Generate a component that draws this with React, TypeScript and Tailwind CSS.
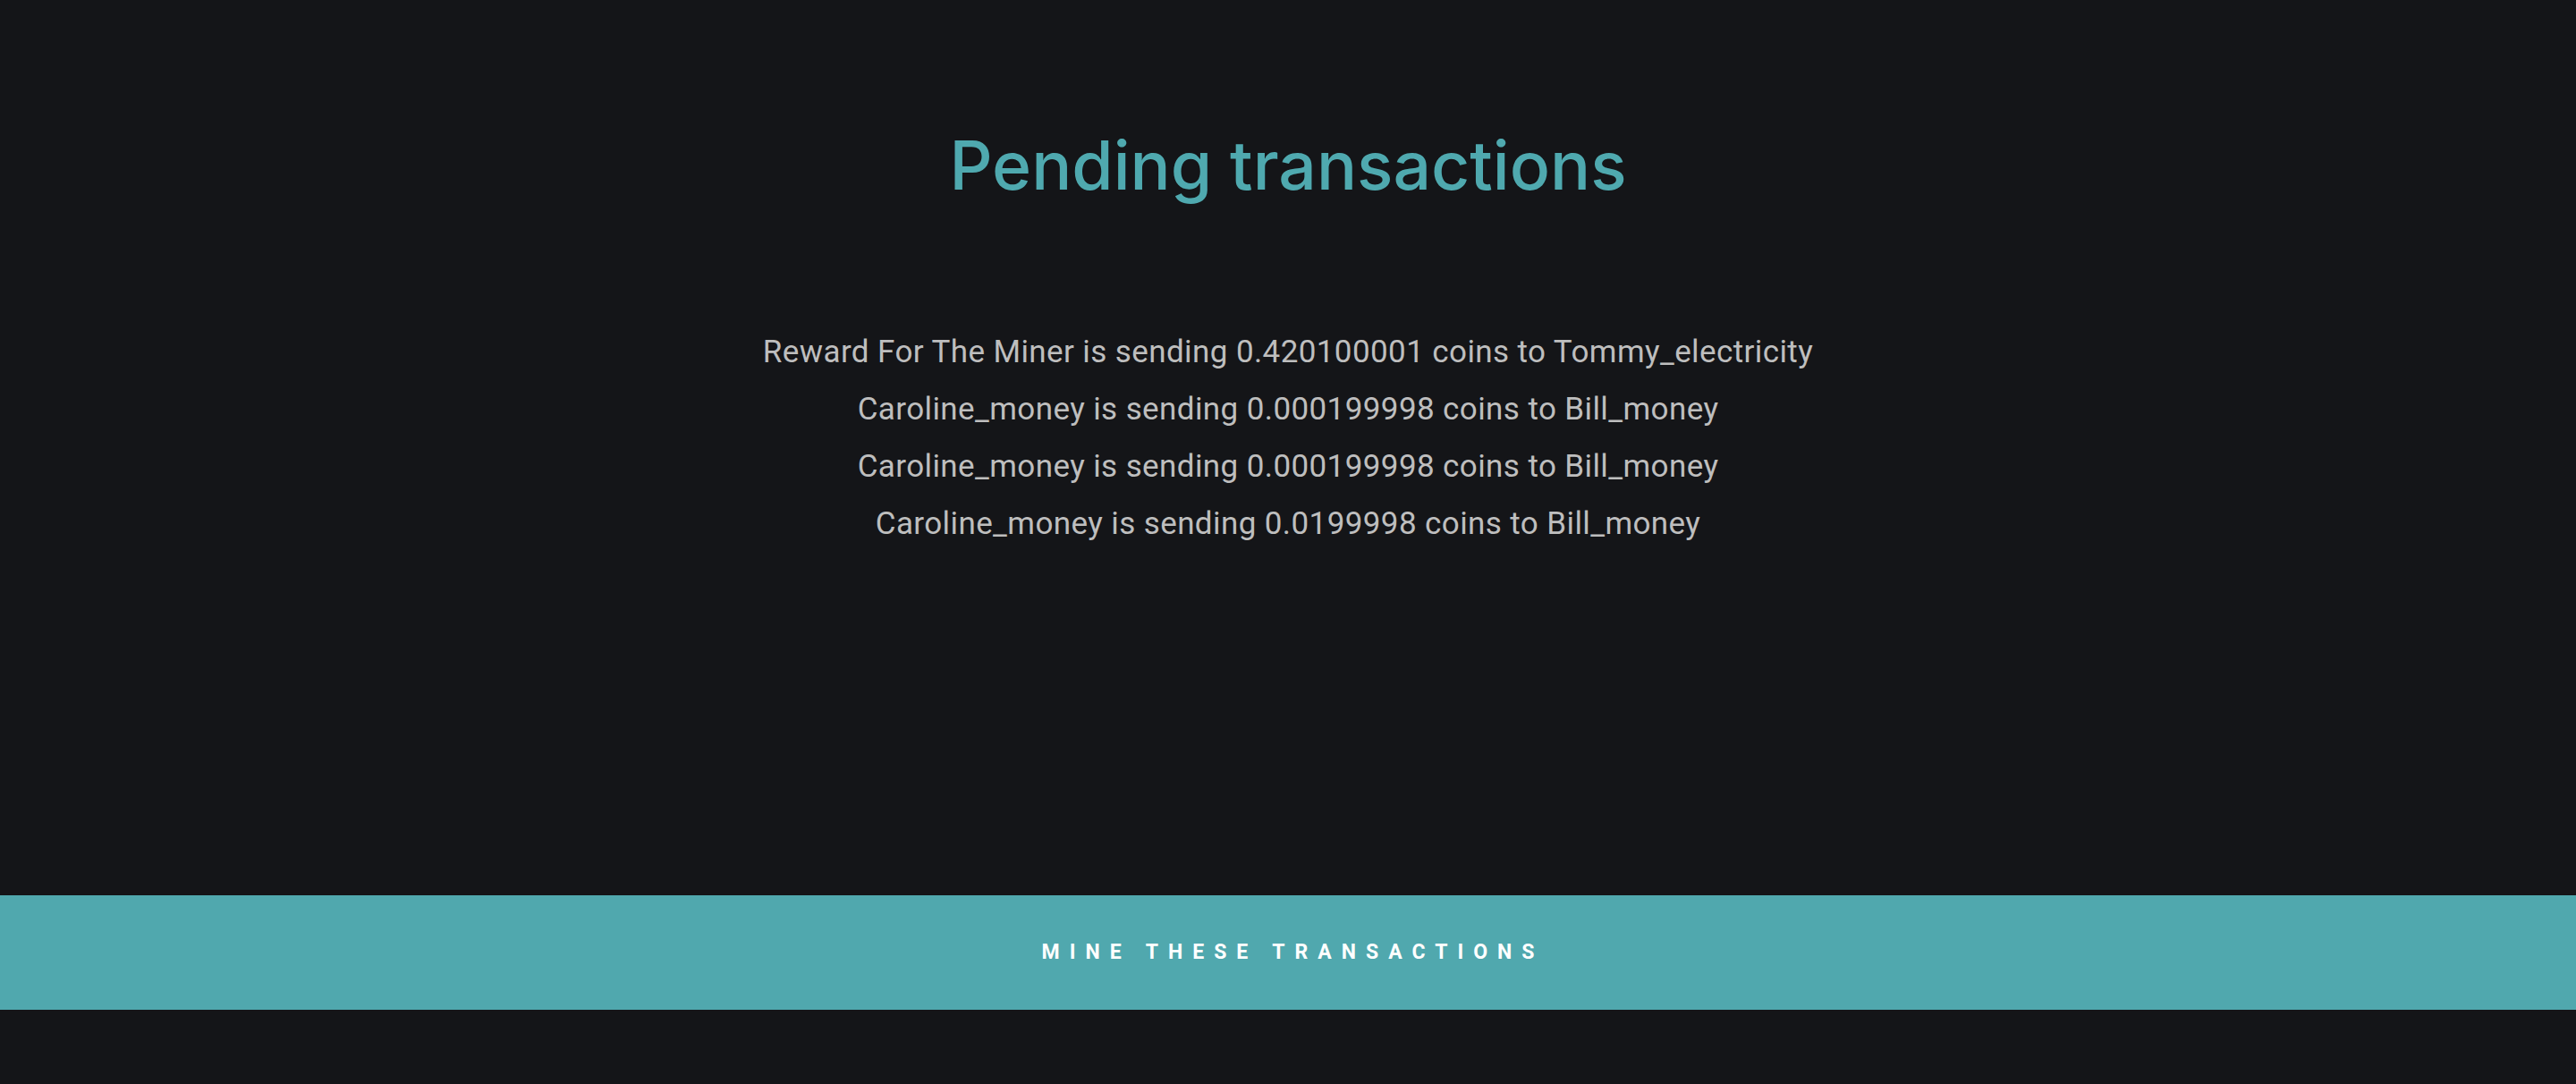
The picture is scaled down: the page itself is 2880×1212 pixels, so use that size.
export default function App() {
  const txs = [
    "Reward For The Miner is sending 0.420100001 coins to Tommy_electricity",
    "Caroline_money is sending 0.000199998 coins to Bill_money",
    "Caroline_money is sending 0.000199998 coins to Bill_money",
    "Caroline_money is sending 0.0199998 coins to Bill_money",
  ];
  return (
    <div className="min-h-[1212px] w-full bg-[#141518] flex flex-col">
      <h1 className="pt-[140px] text-center text-[75px] leading-[90px] font-medium text-[#4fa9af] font-['Inter',_'Noto_Sans',_sans-serif]">
        Pending transactions
      </h1>
      <div className="mt-[132px] flex flex-col items-center text-[35px] leading-[64px] tracking-[0.4px] text-[#bebebe] font-['Roboto',_sans-serif]">
        {txs.map((t, i) => (
          <p key={i}>{t}</p>
        ))}
      </div>
      <div className="mt-[383px] h-[128px] bg-[#50a8ae] flex items-center justify-center">
        <span className="pl-[11px] text-white font-bold text-[23px] tracking-[11px] uppercase font-['Roboto',_sans-serif]">
          Mine these transactions
        </span>
      </div>
    </div>
  );
}
